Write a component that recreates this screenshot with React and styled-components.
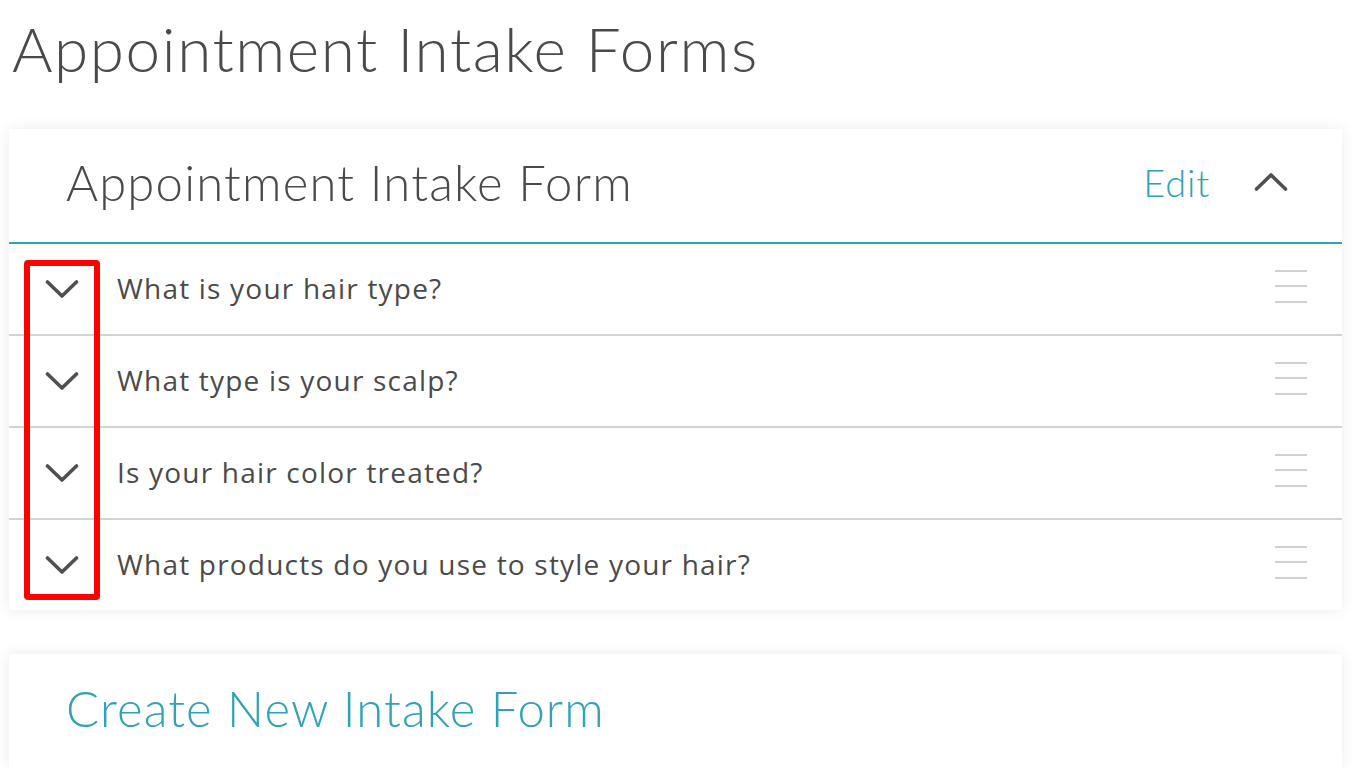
import React from "react";
import styled, { createGlobalStyle } from "styled-components";

const Global = createGlobalStyle`
  html, body { margin: 0; padding: 0; background: #ffffff; }
  body { font-family: Lato, "Open Sans", sans-serif; color: #4a4a4a; }
`;

const Page = styled.div`
  padding: 0 16px 0 9px;
  display: flex;
  flex-direction: column;
`;

const Title = styled.h1`
  margin: 11px 0 0 3px;
  font-size: 62px;
  font-weight: 300;
  line-height: 74px;
  color: #4a4a4a;
  letter-spacing: 1.6px;
`;

const Card = styled.section`
  background: #fff;
  box-shadow: 0 0 14px rgba(0, 0, 0, 0.08);
  margin-top: ${(p) => p.$mt}px;
  position: relative;
`;

const Header = styled.div`
  height: 115px;
  box-sizing: border-box;
  padding: 0 54px 8px 57px;
  display: flex;
  align-items: center;
  border-bottom: 2px solid #2fa2b6;
`;

const HeaderTitle = styled.h2`
  flex: 1;
  margin: 0;
  font-size: 49px;
  font-weight: 300;
  color: #4a4a4a;
  letter-spacing: 1.2px;
`;

const EditLink = styled.a`
  font-size: 38px;
  font-weight: 300;
  color: #2fa2b6;
  margin-right: 44px;
  letter-spacing: 0.8px;
  cursor: pointer;
`;

const Row = styled.div`
  height: 90px;
  display: flex;
  align-items: center;
  border-bottom: ${(p) => (p.$last ? "none" : "2px solid #d2d2d2")};
`;

const ChevronCell = styled.div`
  width: 106px;
  display: flex;
  justify-content: center;
  padding-right: 2px;
`;

const Question = styled.span`
  flex: 1;
  font-family: "Open Sans", Lato, sans-serif;
  font-size: 28px;
  font-weight: 400;
  color: #4a4a4a;
  letter-spacing: 1.2px;
  margin-top: -2px;
`;

const Handle = styled.div`
  width: 32px;
  margin-right: 35px;
  margin-top: -6px;
  display: flex;
  flex-direction: column;
  gap: 13.5px;
  & > span {
    display: block;
    height: 2px;
    background: #d0d0d0;
  }
`;

const Highlight = styled.div`
  position: absolute;
  left: 15px;
  top: 131px;
  width: 64px;
  height: 328px;
  border: 6px solid #ff0000;
  border-radius: 4px;
  pointer-events: none;
`;

const CreateCard = styled(Card)`
  height: 114px;
  box-sizing: border-box;
  padding: 0 0 6px 57px;
  display: flex;
  align-items: center;
`;

const CreateLink = styled.a`
  font-size: 49px;
  font-weight: 300;
  color: #2fa2b6;
  letter-spacing: 1.1px;
  cursor: pointer;
`;

const Chevron = ({ up }) => (
  <svg width="34" height="20" viewBox="0 0 34 20">
    <path
      d={up ? "M2.5 17 L17 3 L31.5 17" : "M2.5 3 L17 17 L31.5 3"}
      fill="none"
      stroke="#4f4f4f"
      strokeWidth="3.6"
      strokeLinecap="round"
      strokeLinejoin="round"
    />
  </svg>
);

const questions = [
  "What is your hair type?",
  "What type is your scalp?",
  "Is your hair color treated?",
  "What products do you use to style your hair?",
];

export default function App() {
  return (
    <>
      <Global />
      <Page>
        <Title>Appointment Intake Forms</Title>
        <Card $mt={44}>
          <Header>
            <HeaderTitle>Appointment Intake Form</HeaderTitle>
            <EditLink>Edit</EditLink>
            <Chevron up />
          </Header>
          {questions.map((q, i) => (
            <Row key={q} $last={i === questions.length - 1}>
              <ChevronCell>
                <Chevron />
              </ChevronCell>
              <Question>{q}</Question>
              <Handle>
                <span />
                <span />
                <span />
              </Handle>
            </Row>
          ))}
          <Highlight />
        </Card>
        <CreateCard $mt={44}>
          <CreateLink>Create New Intake Form</CreateLink>
        </CreateCard>
      </Page>
    </>
  );
}
